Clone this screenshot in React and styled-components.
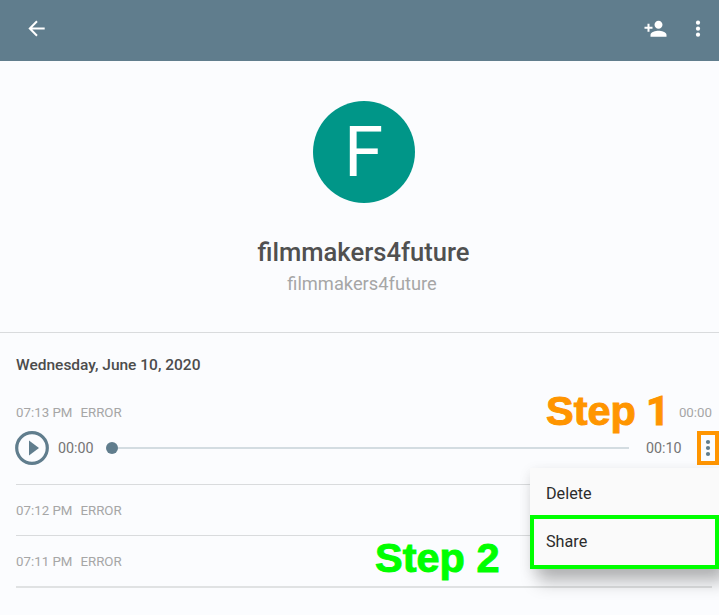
import React from 'react';
import styled, { createGlobalStyle } from 'styled-components';

const GlobalStyle = createGlobalStyle`
  * { box-sizing: border-box; }
  body { margin: 0; background: #fbfcfe; font-family: Roboto, sans-serif; overflow: hidden; }
`;

const Page = styled.div`
  position: relative;
  width: 719px;
  height: 615px;
  overflow: hidden;
  background: #fbfcfe;
`;

const AppBar = styled.header`
  display: flex;
  align-items: center;
  height: 61px;
  padding: 0 9px 5px 24px;
  background: #607d8d;
  color: #fff;
`;

const IconButton = styled.button`
  display: flex;
  padding: 0;
  border: 0;
  background: none;
  color: inherit;
  margin-left: ${({ $push }) => $push || '0'};
`;

const Profile = styled.section`
  display: flex;
  flex-direction: column;
  align-items: center;
  height: 272px;
  padding: 40px 0 0 8px;
  border-bottom: 1px solid #d9dbdd;
`;

const Avatar = styled.div`
  display: flex;
  justify-content: center;
  width: 102px;
  height: 102px;
  border-radius: 50%;
  background: #009688;
  color: #fff;
  font-size: 71px;
  line-height: 102px;
`;

const Name = styled.h1`
  margin: 33px 0 0;
  font-size: 25.6px;
  font-weight: 500;
  line-height: 32px;
  color: #505050;
`;

const Handle = styled.p`
  margin: 4px 3px 0 0;
  font-size: 18.3px;
  line-height: 24px;
  color: #a6a6a6;
`;

const Log = styled.main`
  padding-left: 16px;
`;

const DateHeading = styled.h2`
  margin: 0;
  padding-top: 22px;
  height: 66px;
  font-size: 15.5px;
  font-weight: 500;
  line-height: 20px;
  color: #4c4c4c;
`;

const Entry = styled.article`
  height: ${({ $height }) => $height}px;
  margin-right: 7px;
  border-bottom: ${({ $line }) => $line || 1}px solid ${({ $line }) => ($line ? '#e0e2e3' : '#d9dbdd')};
`;

const Meta = styled.div`
  display: flex;
  gap: 8px;
  padding-top: ${({ $top }) => $top}px;
  font-size: 13.3px;
  line-height: 16px;
  color: #a6a6a6;
`;

const Duration = styled.span`
  margin-left: auto;
`;

const Player = styled.div`
  display: flex;
  align-items: center;
  height: 34px;
  margin: 10px -7px 0 -1px;
`;

const Time = styled.span`
  width: ${({ $width }) => $width}px;
  margin-left: ${({ $gap }) => $gap}px;
  font-size: 14.3px;
  line-height: 18px;
  color: #757575;
`;

const Track = styled.div`
  display: flex;
  align-items: center;
  width: 523.5px;
  height: 12px;
  margin: -1px 0 0 10.5px;
`;

const Knob = styled.span`
  width: 12px;
  height: 12px;
  border-radius: 50%;
  background: #607d8d;
`;

const Rail = styled.span`
  flex: 1;
  height: 2px;
  background: #d3dce1;
`;

const MoreButton = styled.button`
  display: flex;
  align-items: center;
  justify-content: center;
  width: 22px;
  height: 34px;
  margin-left: auto;
  padding: 0;
  border: 4px solid #ff9500;
  background: #fbfcfe;
  color: #607d8d;
`;

const Menu = styled.div`
  position: absolute;
  left: 530px;
  top: 468px;
  width: 189px;
  height: 101px;
  background: #fafafa;
  box-shadow: 8px 13px 16px rgba(0, 0, 0, 0.26), 0 3px 12px rgba(0, 0, 0, 0.08);
`;

const MenuItem = styled.div`
  display: flex;
  align-items: center;
  height: ${({ $marked }) => ($marked ? 54 : 47)}px;
  padding: ${({ $marked }) => ($marked ? '0 12px 2px' : '4px 16px 0')};
  border: ${({ $marked }) => ($marked ? '4px solid #00ff00' : '0')};
  font-size: 16.2px;
  color: #2c2c2c;
`;

const Step = styled.div`
  position: absolute;
  left: ${({ $left }) => $left}px;
  top: ${({ $top }) => $top}px;
  font: bold 41.5px/48px 'Liberation Sans', Arial, sans-serif;
  color: ${({ $color }) => $color};
  -webkit-text-stroke: 1px ${({ $color }) => $color};
  white-space: pre;
`;

const PlainOne = styled.span`
  font-family: Roboto, sans-serif;
  margin-left: -1.5px;
`;

const BackIcon = () => (
  <svg width="24" height="24" viewBox="0 0 24 24" fill="none" stroke="currentColor" strokeWidth="2">
    <path d="M20.7 12.5H6M13 5.3L5.8 12.5l7.2 7.2" />
  </svg>
);

const AddPersonIcon = () => (
  <svg width="24" height="24" viewBox="0 0 24 24" fill="currentColor">
    <path transform="translate(.5 .8)" d="M15 12c2.21 0 4-1.79 4-4s-1.79-4-4-4-4 1.79-4 4 1.79 4 4 4zm-9-2V7H4v3H1v2h3v3h2v-3h3v-2H6zm9 4c-2.67 0-8 1.34-8 4v2h16v-2c0-2.66-5.33-4-8-4z" />
  </svg>
);

const MoreIcon = ({ width = 24, offset = 0 }) => (
  <svg width={width} height="24" viewBox={`${12 - width / 2} ${-offset} ${width} 24`} fill="currentColor">
    <circle cx="12" cy="6" r="2.1" />
    <circle cx="12" cy="12" r="2.1" />
    <circle cx="12" cy="18" r="2.1" />
  </svg>
);

const PlayIcon = () => (
  <svg width="34" height="34" viewBox="0 0 34 34">
    <circle cx="17" cy="17" r="15.3" fill="none" stroke="#607d8d" strokeWidth="3.2" />
    <path d="M14 9.5v15L24 17z" fill="#607d8d" />
  </svg>
);

export default function App() {
  return (
    <Page>
      <GlobalStyle />
      <AppBar>
        <IconButton aria-label="Back"><BackIcon /></IconButton>
        <IconButton aria-label="Add contact" $push="auto"><AddPersonIcon /></IconButton>
        <IconButton aria-label="More" $push="19px"><MoreIcon offset={0.7} /></IconButton>
      </AppBar>
      <Profile>
        <Avatar>F</Avatar>
        <Name>filmmakers4future</Name>
        <Handle>filmmakers4future</Handle>
      </Profile>
      <Log>
        <DateHeading>Wednesday, June 10, 2020</DateHeading>
        <Entry $height={86}>
          <Meta $top={6}>
            <span>07:13 PM</span>
            <span>ERROR</span>
            <Duration>00:00</Duration>
          </Meta>
          <Player>
            <PlayIcon />
            <Time $width={37} $gap={9}>00:00</Time>
            <Track><Knob /><Rail /></Track>
            <Time $width={37} $gap={17}>00:10</Time>
            <MoreButton aria-label="Message options"><MoreIcon width={14} /></MoreButton>
          </Player>
        </Entry>
        <Entry $height={51}>
          <Meta $top={18}><span>07:12 PM</span><span>ERROR</span></Meta>
        </Entry>
        <Entry $height={52} $line={2}>
          <Meta $top={18}><span>07:11 PM</span><span>ERROR</span></Meta>
        </Entry>
      </Log>
      <Menu>
        <MenuItem>Delete</MenuItem>
        <MenuItem $marked>Share</MenuItem>
      </Menu>
      <Step $left={546} $top={387} $color="#ff9500">Step <PlainOne>1</PlainOne></Step>
      <Step $left={375} $top={534} $color="#00ff00">Step 2</Step>
    </Page>
  );
}
